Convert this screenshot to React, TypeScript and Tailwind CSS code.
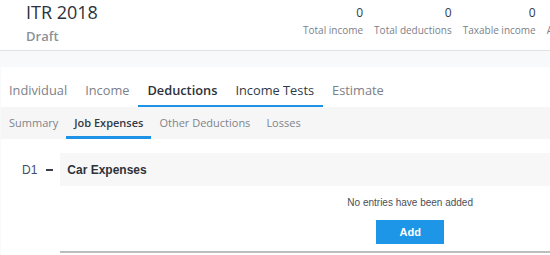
import React from 'react';

const stats = [
  { label: 'Total income', value: '0' },
  { label: 'Total deductions', value: '0' },
  { label: 'Taxable income', value: '0' },
  { label: 'Assessed tax', value: '0' },
];

const mainTabs = ['Individual', 'Income', 'Deductions', 'Income Tests', 'Estimate'];
const subTabs = ['Summary', 'Job Expenses', 'Other Deductions', 'Losses'];

export default function App() {
  return (
    <div className="w-screen h-screen overflow-hidden bg-[#f8f9fb]">
      <div className="w-[760px] font-['Open_Sans',sans-serif]">
        {/* header */}
        <div className="h-[51px] bg-white border-b border-[#e1e2e4] flex">
          <div className="pl-[26px] w-[290px]">
            <div className="text-[18px] leading-[24px] text-[#2b323c]">ITR 2018</div>
            <div className="text-[13px] leading-[18px] font-semibold text-[#8b9099] mt-[3px]">Draft</div>
          </div>
          <div className="flex gap-[11px] pt-[5px] ml-[13px]">
            {stats.map((s) => (
              <div key={s.label} className="flex flex-col items-end">
                <span className="text-[12px] leading-[16px] text-[#2f3a4a]">{s.value}</span>
                <span className="text-[10px] leading-[14px] text-[#7b818a] mt-[2px]">{s.label}</span>
              </div>
            ))}
          </div>
        </div>

        {/* panel */}
        <div className="mt-[16px] ml-[1px] bg-white">
          <div className="flex h-[40px] items-end -ml-[1px]">
            {mainTabs.map((t) => {
              const lined = t === 'Deductions' || t === 'Income Tests';
              return (
                <div
                  key={t}
                  className={`px-[9px] h-[39px] pt-[8px] flex items-center text-[12.8px] border-b-2 ${
                    lined ? 'border-[#1e93e6]' : 'border-transparent'
                  } ${
                    t === 'Deductions'
                      ? 'font-semibold text-[#2d3138]'
                      : t === 'Income Tests'
                        ? 'text-[#2e3a4a]'
                        : 'text-[#7c8088]'
                  }`}
                >
                  {t}
                </div>
              );
            })}
          </div>
          <div className="h-[32px] bg-[#f6f6f6] flex items-end">
            {subTabs.map((t) => (
              <div
                key={t}
                className={`px-2 h-[32px] flex items-center text-[11px] border-b-[3px] pt-[3px] ${
                  t === 'Job Expenses'
                    ? 'border-[#1e93e6] font-semibold text-[#333a44]'
                    : 'border-transparent text-[#80848b]'
                }`}
              >
                {t}
              </div>
            ))}
          </div>

          {/* section */}
          <div className="flex pt-[14px] pb-[3px] font-['Liberation_Sans',Arial,sans-serif]">
            <div className="flex items-start h-[33px] pl-[21px]">
              <div className="h-[33px] flex items-center text-[12px] text-[#3f4e6a]">D1</div>
              <div className="h-[33px] flex items-center ml-[9px]">
                <span className="block w-[7px] h-[2px] bg-[#3a3f47]" />
              </div>
            </div>
            <div className="ml-[7px] flex-1">
              <div className="h-[33px] bg-[#f7f7f7] flex items-center pl-[7px] text-[12px] font-bold text-[#2f3237]">
                Car Expenses
              </div>
              <div className="flex flex-col items-center border-b-2 border-[#bdbdbd] pt-[10px] pb-[7px]">
                <div className="text-[10px] leading-[14px] text-[#4a4f57]">No entries have been added</div>
                <button className="mt-[10px] w-[68px] h-[24px] bg-[#1e96e8] text-white text-[11px] font-bold">
                  Add
                </button>
              </div>
            </div>
          </div>
        </div>
      </div>
    </div>
  );
}
